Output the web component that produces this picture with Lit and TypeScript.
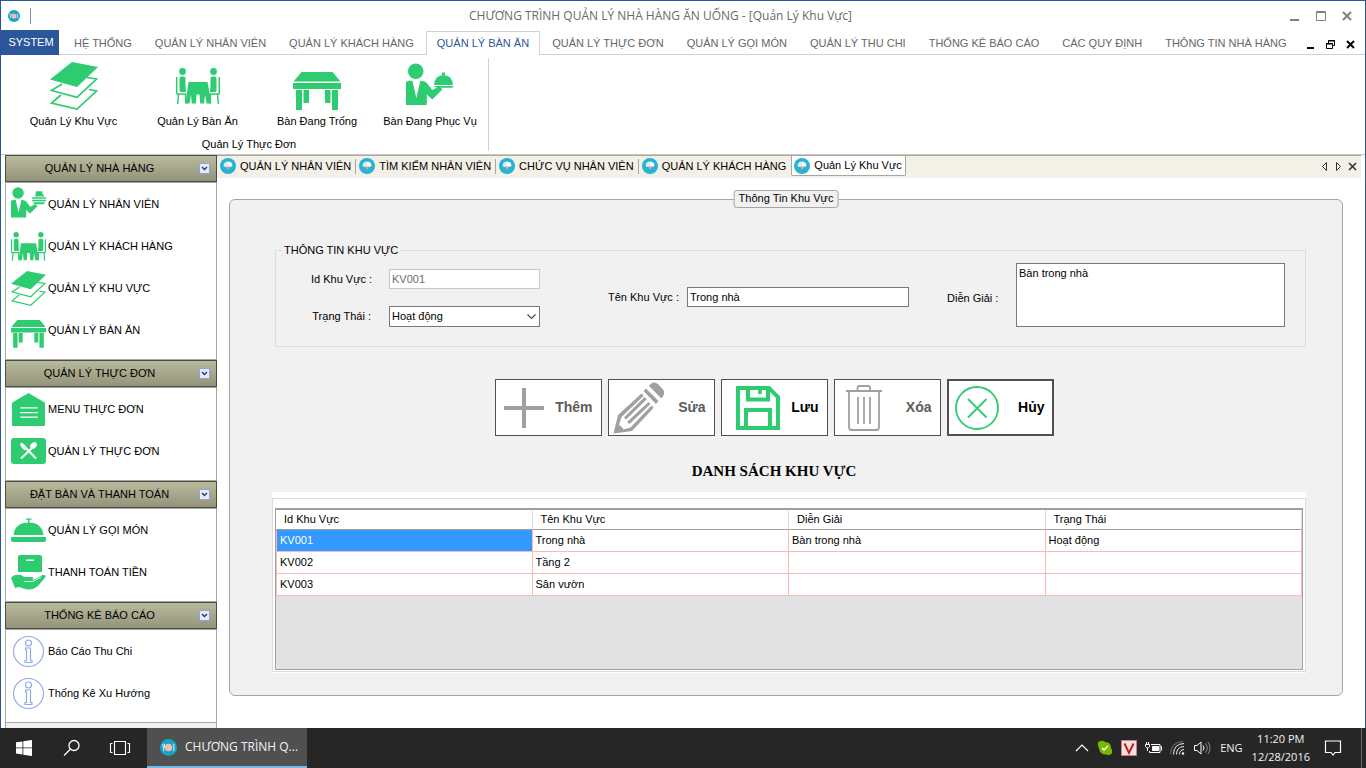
import { LitElement, html, css, svg, nothing } from "lit";
import { customElement } from "lit/decorators.js";
import { classMap } from "lit/directives/class-map.js";

const diner = svg`
  <circle cx="6.500" cy="3.500" r="3.400"/>
  <path d="M3.500 10.500q0-2 2-2h2q2 0 2 2v7.500l.5 6h-5q-1.500 0-1.500-1.500z"/>
  <path d="M.7 9v17M.7 26h10M2.500 26l-.8 10M9.500 26l.4 9.500" fill="none" stroke="currentColor" stroke-width="1.500"/>`;

const waiterBody = svg`
  <circle cx="9.700" cy="8.300" r="7.800"/>
  <path d="M0 19q3-2 6.500-1l3.800 17 4-17q4-.5 6.500 2l5.500 7 6-3q3-.5 4 2.500l-10 10-5.500-5v10.500H0z"/>`;

const layers = html`<svg viewBox="0 0 48 48" fill="currentColor">
  <path d="M0 17.500 22 0 48 5 27 25z"/>
  <path d="M12 22 1.500 28.500 27 35.300 46.500 17 37 15.500M11 33 1.500 41 27 47 46.500 29 39 27.500" fill="none" stroke="currentColor" stroke-width="1.700"/>
</svg>`;
const diners = html`<svg viewBox="0 0 44 36" fill="currentColor">
  ${diner}<g transform="translate(44 0) scale(-1 1)">${diner}</g>
  <path d="M12.500 14h19l4 21.500h-5l-1.500-9-.8 9h-4l-.7-9h-3l-.7 9h-4l-.8-9-1.500 9h-4z"/>
</svg>`;
const table = html`<svg viewBox="0 0 48 38" fill="currentColor">
  <path d="M8.500 0h31L47.500 9.500H.5zM0 11h48v6H0zM3 18h6v20H3zM10.500 18H16v13h-5.500zM32 18h5.500v13H32zM39 18h6v20h-6z"/>
</svg>`;
const waiterDome = html`<svg viewBox="0 0 48 46" fill="currentColor">
  ${waiterBody}
  <path d="M28 22q1-10 9.500-10T47 22zM27 23h21l-2 1.800H31zM36 9.500h3V12h-3z"/>
</svg>`;
const waiterTray = html`<svg viewBox="0 0 48 46" fill="currentColor">
  ${waiterBody}
  <path d="M34 9v-3h9v3l3 4H33zM29 14h19v2H29zM29 17.500h19v2H29zM30 21h17l-2 2.500H32z"/>
</svg>`;
const house = html`<svg viewBox="0 0 34 32" fill="currentColor">
  <path d="M17 0 33 9.500V32H1V9.500z"/>
  <path d="M9 14.500h17M9 19h17M9 23.500h17" stroke="#fff" stroke-width="1.200"/>
</svg>`;
const cutlery = html`<svg viewBox="0 0 35 26" fill="currentColor">
  <rect width="35" height="26" rx="3"/>
  <path d="M10 20.500 21 10M12 7l13 13.500" stroke="#fff" stroke-width="2" fill="none"/>
  <ellipse cx="22.500" cy="7.500" rx="3.800" ry="2.800" transform="rotate(-45 22.500 7.500)" fill="#fff"/>
  <path d="m9 6 2-1.500 5 5-1.500 3q-4-1.500-5.500-6.500z" fill="#fff"/>
</svg>`;
const bell = html`<svg viewBox="0 0 35 25" fill="currentColor">
  <path d="M2.500 17Q4 4.500 17.500 4.500T32.500 17zM0 19h35v3q0 2-2 2H2q-2 0-2-2zM15 .5h5.500v1.300H15zM17 1.500h1.500V5H17z"/>
</svg>`;
const hand = html`<svg viewBox="0 0 35 35" fill="currentColor">
  <path d="M9 0h20q2 0 2 2v15H7V2q0-2 2-2z"/><path d="M15 4.500h8V6h-8z" fill="#fff"/>
  <path d="M0 23q3-4 9-3 3 .5 4 2h8q2.500 1 .5 3h-4 5l9-5q3.500-.5 3 2L27 31q-5 4-11 3.500L8 32l-4 1z"/>
  <path d="M13 26.500h9l8-4.500" stroke="#fff" stroke-width=".8" fill="none"/>
</svg>`;
const info = html`<svg viewBox="0 0 35 35" fill="none" stroke="#8ea7ea" stroke-width="1.100">
  <circle cx="17.500" cy="17.500" r="15"/><circle cx="17.500" cy="9" r="3"/>
  <path d="M14.500 14h5v12.500H21v2h-7v-2h1.500V16h-1z"/>
</svg>`;
const brand = html`<svg viewBox="0 0 16 16">
  <circle cx="8" cy="8" r="8" fill="#12a5c6"/><circle cx="8" cy="8" r="3.500" fill="#f7b8b4"/>
  <path d="M2.800 4.500v3q0 1 .7 1v3M4.200 4.500v3q0 1-.7 1M13 4.500v7" stroke="#fff" stroke-width=".8" fill="none"/>
</svg>`;
const docIcon = html`<svg viewBox="0 0 16 16">
  <circle cx="8" cy="8" r="8" fill="#27b3d4"/>
  <path d="M3.500 8q0-4.500 4.500-4.500T12.500 8L11 9H5z" fill="#d3eef5"/>
  <path d="M8 4q4 0 4 4H8z" fill="#fff"/><path d="M6 8.500h4.500L8 12z" fill="#f09a94"/>
</svg>`;
const plus = html`<svg viewBox="0 0 40 40" class="i40"><path d="M20 0v40M0 20h40" stroke="#a0a0a0" stroke-width="4"/></svg>`;
const pencil = html`<svg viewBox="0 0 52 52" class="i52" fill="#a0a0a0">
  <path d="M36 4q4-6 9-2l5.500 6q2 4-2 8.500z"/><path d="M33 6.500 45.500 19l-2.500 3L30.500 9z"/>
  <path d="M.5 51.500 5 33 28.500 11.500l2.200 2.200L8.500 35l-2.500 8q3 1 4.500 4.500l7-2L38.500 23.500l2.200 2.200L19 49z"/>
  <path d="m12 36.500 20.500-20.500 2.300 2.300L14 38.500zM15 41l21.500-20 2 2L17.500 43z" transform="translate(-1 -1)"/>
</svg>`;
const floppy = html`<svg viewBox="0 0 44 44" class="i44" fill="none" stroke="#2ecc71" stroke-width="4">
  <path d="M2 2h31l9 9v31H2zM12 2v11.500h20V2M10 44V24h24v20"/><path d="M24 2v6" stroke-width="3.500"/>
</svg>`;
const bin = html`<svg viewBox="0 0 36 46" class="bin" fill="none" stroke="#a0a0a0" stroke-width="1.800">
  <path d="M0 6h36M11.500 6V3q0-2 2-2h8.500q2 0 2 2v3M3 6v36q0 3 2.500 3h25q2.500 0 2.500-3V6M12 12v27M18 12v27M24 12v27"/>
</svg>`;
const cancel = html`<svg viewBox="0 0 44 44" class="i44" fill="none" stroke="#2ecc71" stroke-width="1.800">
  <circle cx="22" cy="22" r="21"/><path d="m13 13 18.500 18.500M31.500 13 13 31.500"/>
</svg>`;

const MENUS = ["HỆ THỐNG", "QUẢN LÝ NHÂN VIÊN", "QUẢN LÝ KHÁCH HÀNG", "QUẢN LÝ BÀN ĂN", "QUẢN LÝ THỰC ĐƠN", "QUẢN LÝ GỌI MÓN", "QUẢN LÝ THU CHI", "THỐNG KÊ BÁO CÁO", "CÁC QUY ĐỊNH", "THÔNG TIN NHÀ HÀNG"];
const RIBBON = [
  { label: "Quản Lý Khu Vực", icon: layers, cls: "" },
  { label: "Quản Lý Bàn Ăn", icon: diners, cls: "small" },
  { label: "Bàn Đang Trống", icon: table, cls: "low" },
  { label: "Bàn Đang Phục Vụ", icon: waiterDome, cls: "" },
];
const GROUPS = [
  { title: "QUẢN LÝ NHÀ HÀNG", items: [
    { label: "QUẢN LÝ NHÂN VIÊN", icon: waiterTray },
    { label: "QUẢN LÝ KHÁCH HÀNG", icon: diners },
    { label: "QUẢN LÝ KHU VỰC", icon: layers },
    { label: "QUẢN LÝ BÀN ĂN", icon: table, low: true }] },
  { title: "QUẢN LÝ THỰC ĐƠN", items: [
    { label: "MENU THỰC ĐƠN", icon: house },
    { label: "QUẢN LÝ THỰC ĐƠN", icon: cutlery }] },
  { title: "ĐẶT BÀN VÀ THANH TOÁN", items: [
    { label: "QUẢN LÝ GỌI MÓN", icon: bell },
    { label: "THANH TOÁN TIỀN", icon: hand }] },
  { title: "THỐNG KÊ BÁO CÁO", items: [
    { label: "Báo Cáo Thu Chi", icon: info },
    { label: "Thống Kê Xu Hướng", icon: info }] },
];
const DOCS = ["QUẢN LÝ NHÂN VIÊN", "TÌM KIẾM NHÂN VIÊN", "CHỨC VỤ NHÂN VIÊN", "QUẢN LÝ KHÁCH HÀNG", "Quản Lý Khu Vực"];
const ACTIONS = [
  { label: "Thêm", icon: plus, disabled: true },
  { label: "Sửa", icon: pencil, disabled: true },
  { label: "Lưu", icon: floppy },
  { label: "Xóa", icon: bin, disabled: true },
  { label: "Hủy", icon: cancel, focus: true },
];
const COLUMNS = ["Id Khu Vực", "Tên Khu Vực", "Diễn Giải", "Trạng Thái"];
const ROWS = [
  ["KV001", "Trong nhà", "Bàn trong nhà", "Hoạt động"],
  ["KV002", "Tầng 2", "", ""],
  ["KV003", "Sân vườn", "", ""],
];

const base = css`
  * { box-sizing: border-box; }
  button, input, select, textarea { font: inherit; color: inherit; margin: 0; border-radius: 0; }
  button { border: 0; padding: 0; background: none; }
  svg { display: block; flex: none; overflow: visible; }
`;

@customElement("app-ribbon")
class AppRibbon extends LitElement {
  static styles = [base, css`
    :host { display: block; background: #fff; }
    .title { display: flex; align-items: center; height: 29px; padding: 0 13px 0 7px; color: #6a6a6a; }
    .logo svg { width: 12px; height: 12px; }
    .rule { width: 1px; height: 16px; margin-left: 10px; background: #8a8a8a; }
    .name { flex: 1; text-align: center; font: 12px/16px "Open Sans", sans-serif; }
    .win { display: flex; gap: 16px; }
    .win svg { width: 10px; height: 10px; }
    .tabs { display: flex; height: 25px; box-shadow: inset 0 -1px #d2d2d2; color: #666; }
    .system { width: 58px; background: #2b579a; color: #fff; font-size: 11px; padding: 0 0 1px 2px; margin-right: 4px; }
    .tab { padding: 0 10px; border: 1px solid transparent; border-bottom: 0; margin: 1px 1px 0 0; white-space: nowrap; }
    .tab.on { background: #fff; border-color: #d2d2d2; color: #2b579a; }
    .mdi { display: flex; align-items: center; gap: 11px; margin-left: auto; padding: 4px 10px 0 0; }
    .mdi svg { width: 9px; height: 9px; }
    .panel { display: flex; height: 100px; padding-top: 3px; border-bottom: 1px solid #c8c8c8; }
    .group { display: flex; flex-direction: column; height: 93px; padding: 0 4px 0 9px; border-right: 1px solid #d2d2d2; color: #000; }
    .items { display: grid; grid-template-columns: 127px 121px 118px 108px; }
    .item { display: flex; flex-direction: column; align-items: center; gap: 4px; padding-top: 4px; }
    .pic { display: flex; align-items: center; height: 48px; color: #2ecc71; }
    .pic svg { width: 48px; }
    .pic.small svg { width: 44px; }
    .pic.low { align-items: flex-end; }
    .item, .caption { line-height: 15px; }
    .caption { margin-top: 8px; padding-left: 4px; text-align: center; }
  `];
  render() {
    return html`
      <header class="title">
        <span class="logo">${brand}</span><span class="rule"></span>
        <span class="name">CHƯƠNG TRÌNH QUẢN LÝ NHÀ HÀNG ĂN UỐNG - [Quản Lý Khu Vực]</span>
        <span class="win">
          <button aria-label="Minimize"><svg viewBox="0 0 10 10"><path d="M0 9h9" stroke="#808080" stroke-width="2"/></svg></button>
          <button aria-label="Maximize"><svg viewBox="0 0 10 10"><path d="M.5.5h9v9h-9zM0 1.500h10" fill="none" stroke="#808080"/></svg></button>
          <button aria-label="Close"><svg viewBox="0 0 10 10"><path d="m1 1 8 8M9 1 1 9" stroke="#808080" stroke-width="2"/></svg></button>
        </span>
      </header>
      <nav class="tabs">
        <button class="system">SYSTEM</button>
        ${MENUS.map((m, i) => html`<button class=${classMap({ tab: true, on: i === 3 })}>${m}</button>`)}
        <span class="mdi">
          <button aria-label="Minimize child"><svg viewBox="0 0 9 9"><path d="M1 8h7" stroke="#000" stroke-width="2"/></svg></button>
          <button aria-label="Restore child"><svg viewBox="0 0 9 9"><path d="M2.500 3V.5h6v5H7M0.500 3.500h6v5h-6zM2 1h7M0 4h7" fill="none" stroke="#000"/></svg></button>
          <button aria-label="Close child"><svg viewBox="0 0 9 9"><path d="m1 1 7 7M8 1 1 8" stroke="#000" stroke-width="2"/></svg></button>
        </span>
      </nav>
      <div class="panel">
        <div class="group">
          <div class="items">
            ${RIBBON.map((r) => html`<button class="item"><span class="pic ${r.cls}">${r.icon}</span>${r.label}</button>`)}
          </div>
          <div class="caption">Quản Lý Thực Đơn</div>
        </div>
      </div>`;
  }
}

@customElement("app-sidebar")
class AppSidebar extends LitElement {
  static styles = [base, css`
    :host { display: flex; flex-direction: column; width: 212px; background: #f0f0f0; border: solid #a5a5a5; border-width: 0 1px; }
    .head { display: flex; align-items: center; height: 27px; margin: 0 -1px; padding: 0 6px 0 0; border: 1px solid #4c4c43; background: linear-gradient(#b9b99c, #94947b); }
    .head h2 { flex: 1; margin: 0; padding-right: 6px; font: inherit; text-align: center; }
    .fold { width: 11px; height: 11px; border: 1px solid #93a5c8; background: #e4ebf8; }
    .list { margin: 0; padding: 0 0 8px; list-style: none; background: #fff; border: solid #a5a5a5; border-width: 1px 0; }
    .link { display: flex; align-items: center; gap: 2px; height: 42px; padding-left: 5px; color: #000; text-decoration: none; }
    .pic { display: flex; align-items: center; justify-content: center; width: 35px; height: 35px; color: #2ecc71; }
    .pic svg { width: 35px; max-height: 35px; }
    .pic.low { align-items: flex-end; }
  `];
  render() {
    return GROUPS.map((g) => html`
      <div class="head"><h2>${g.title}</h2>
        <button class="fold" aria-label="Toggle ${g.title}"><svg viewBox="0 0 9 9"><path d="m2 3 2.500 2.500L7 3" fill="none" stroke="#223a7a" stroke-width="1.400"/></svg></button>
      </div>
      <ul class="list">
        ${g.items.map((it: any) => html`<li><a class="link" href="#"><span class=${classMap({ pic: true, low: !!it.low })}>${it.icon}</span>${it.label}</a></li>`)}
      </ul>`);
  }
}

@customElement("area-form")
class AreaForm extends LitElement {
  static styles = [base, css`
    :host { display: flex; flex-direction: column; flex: 1; min-width: 0; background: #fff; }
    .strip { display: flex; height: 23px; margin-right: 4px; background: #f3f0e8; border-top: 1px solid #aca899; }
    .doc { position: relative; display: flex; align-items: center; gap: 4px; height: 20px; padding: 0 5px 0 3px; white-space: nowrap; }
    .doc svg { width: 16px; height: 16px; }
    .doc::after { content: ""; position: absolute; right: 0; top: 3px; bottom: 2px; width: 1px; background: #aca899; }
    .doc.last::after { display: none; }
    .doc.on { background: #fff; border: 1px solid #aca899; border-top: 0; border-radius: 0 0 2px 2px; padding: 0 3px 0 2px; }
    .doc.on::after { display: none; }
    .tools { display: flex; align-items: center; gap: 5px; margin-left: auto; padding: 0 4px 2px 0; }
    .tools svg { width: 9px; height: 9px; }
    .panel { position: relative; flex: 1; display: flex; flex-direction: column; margin: 21px 18px 32px 12px; padding: 44px 36px 22px 42px; background: #f1f1f1; border: 1px solid #a5a5a5; border-radius: 6px; margin-right: 22px; }
    .tag { position: absolute; top: -10px; left: 50%; transform: translateX(-50%); margin: 0; padding: 0 4px; height: 18px; font: inherit; line-height: 15px; white-space: nowrap; background: #f1f1f1; border: 1px solid #a5a5a5; border-radius: 3px; }
    .info { display: flex; gap: 38px; margin: 0 0 0 3px; padding: 6px 20px 19px 35px; border: 1px solid #dcdcdc; }
    .info legend { margin-left: -29px; padding: 0 2px; line-height: 13px; }
    label { white-space: nowrap; }
    .pair { display: grid; grid-template-columns: 78px 1fr; row-gap: 17px; align-content: start; align-items: center; flex: 229 1 0; margin-right: 30px; padding-top: 6px; }
    .pair label { text-align: right; padding-right: 18px; }
    .field { display: grid; grid-template-columns: 79px 1fr; align-items: center; align-content: start; flex: 301 1 0; padding-top: 24px; }
    .notes { display: grid; grid-template-columns: 69px 1fr; align-items: center; flex: 338 1 0; }
    .notes label { padding-top: 6px; }
    input, select, textarea { display: block; width: 100%; background: #fff; border: 1px solid #7a7a7a; border-radius: 0; outline: 0; }
    input { height: 20px; padding: 0 2px; }
    input:disabled { color: #6d6d6d; border-color: #c6c6c6; }
    .drop { position: relative; }
    .drop svg { position: absolute; right: 4px; top: 8px; width: 9px; height: 6px; pointer-events: none; }
    select { appearance: none; height: 21px; padding: 0 2px; }
    textarea { height: 64px; padding: 3px 2px; resize: none; line-height: 13px; }
    .lower { padding-right: 30px; }
    .actions { display: flex; justify-content: center; gap: 6px; margin-top: 32px; }
    .act { display: flex; align-items: center; justify-content: space-between; width: 107px; height: 57px; padding: 0 8px; background: #fff; border: 1px solid #505050; font-size: 14px; font-weight: 700; color: #000; }
    .act:disabled { color: #5c5c5c; }
    .act.focus { border-width: 2px; padding: 0 7px 0 6px; }
    .i40 { width: 40px; height: 40px; }
    .i44 { width: 44px; height: 44px; }
    .act:not(.focus) .i44 { margin-left: 6px; }
    .i52 { width: 52px; height: 52px; margin-left: -4px; }
    .bin { width: 36px; height: 46px; margin-left: 3px; }
    .caption { margin: 26px 0 0; font: 700 15px/18px "Liberation Serif", serif; text-align: center; color: #000; }
    .group { flex: 1; display: flex; margin-top: 12px; padding: 6px 0 1px; background: #fff; }
    .frame { flex: 1; display: flex; padding: 9px 2px 1px; border: 1px solid #dcdcdc; }
    .grid { flex: 1; background: #e2e2e2; border: 1px solid #a0a0a0; border-top-width: 2px; }
    table { width: 100%; table-layout: fixed; border-collapse: separate; border-spacing: 0; background: #fff; }
    th { height: 20px; padding: 0 8px; font-weight: 400; text-align: left; border-right: 1px solid #dcdcdc; border-bottom: 1px solid #a0a0a0; }
    td { height: 22px; padding: 0 3px; border-right: 1px solid #ffb8b8; border-bottom: 1px solid #ffb8b8; }
    td:first-child { border-left: 1px solid #ffb8b8; }
    .sel { background: #3399ff; color: #fff; }
  `];
  render() {
    return html`
      <nav class="strip">
        ${DOCS.map((d, i) => html`<button class=${classMap({ doc: true, on: i === 4, last: i === 3 })}>${docIcon}${d}</button>`)}
        <span class="tools">
          <button aria-label="Previous"><svg viewBox="0 0 9 9"><path d="M6.500.5v8l-4-4z" fill="none" stroke="#333"/></svg></button>
          <button aria-label="Next"><svg viewBox="0 0 9 9"><path d="M2.500.5v8l4-4z" fill="none" stroke="#333"/></svg></button>
          <button aria-label="Close tab"><svg viewBox="0 0 9 9"><path d="m1 1 7 7M8 1 1 8" stroke="#333" stroke-width="1.600"/></svg></button>
        </span>
      </nav>
      <section class="panel">
        <h1 class="tag">Thông Tin Khu Vực</h1>
        <fieldset class="info">
          <legend>THÔNG TIN KHU VỰC</legend>
          <div class="pair">
            <label for="id">Id Khu Vực :</label><input id="id" value="KV001" disabled>
            <label for="state">Trạng Thái :</label>
            <span class="drop"><select id="state"><option>Hoạt động</option></select>
              <svg viewBox="0 0 9 6"><path d="m.5.5 4 4 4-4" fill="none" stroke="#444" stroke-width="1.100"/></svg></span>
          </div>
          <div class="field"><label for="name">Tên Khu Vực :</label><input id="name" value="Trong nhà"></div>
          <div class="notes"><label for="notes">Diễn Giải :</label><textarea id="notes" .value=${"Bàn trong nhà"}></textarea></div>
        </fieldset>
        <div class="lower">
          <div class="actions">
            ${ACTIONS.map((a) => html`<button class=${classMap({ act: true, focus: !!a.focus })} ?disabled=${!!a.disabled}>${a.icon}${a.label}</button>`)}
          </div>
          <h2 class="caption">DANH SÁCH KHU VỰC</h2>
        </div>
        <div class="group"><div class="frame"><div class="grid">
          <table>
            <thead><tr>${COLUMNS.map((c) => html`<th>${c}</th>`)}</tr></thead>
            <tbody>${ROWS.map((r, y) => html`<tr>${r.map((c, x) => html`<td class=${x + y === 0 ? "sel" : nothing}>${c}</td>`)}</tr>`)}</tbody>
          </table>
        </div></div></div>
      </section>`;
  }
}

@customElement("app-taskbar")
class AppTaskbar extends LitElement {
  static styles = [base, css`
    :host { display: flex; align-items: center; height: 40px; background: #262626; color: #f2f2f2; font: 12px/18px "Open Sans", sans-serif; }
    .start { display: flex; gap: 30px; padding: 0 17px 0 16px; }
    .task { display: flex; align-items: center; gap: 8px; width: 160px; height: 40px; padding: 0 8px 0 13px; background: #505050; border-bottom: 2px solid #76b9ed; white-space: nowrap; }
    .task svg { width: 17px; height: 17px; }
    .tray { display: flex; align-items: center; gap: 8px; margin-left: auto; height: 40px; padding-right: 20px; font-size: 11px; border-right: 1px solid #6a6a6a; margin-right: 4px; }
    .clock { padding-right: 7px; text-align: center; }
    .lang { padding: 0 1px; }
  `];
  render() {
    return html`
      <div class="start">
        <button aria-label="Start"><svg width="16" height="16" viewBox="0 0 16 16" fill="#fff"><path d="M0 2.300 6.500 1.400v6.100H0zM7.300 1.300 16 0v7.500H7.300zM0 8.300h6.500v6.200L0 13.600zM7.300 8.300H16V16l-8.700-1.300z"/></svg></button>
        <button aria-label="Search"><svg width="18" height="16" viewBox="0 0 18 16" fill="none" stroke="#fff" stroke-width="1.300"><circle cx="12" cy="5.500" r="5"/><path d="M8.500 9 2 15.500"/></svg></button>
        <button aria-label="Task view"><svg width="20" height="14" viewBox="0 0 20 14" fill="none" stroke="#fff" stroke-width="1.100"><path d="M4.500.5h11v13h-11zM2.500 2.500H.5v9h2M17.500 2.500h2v9h-2"/></svg></button>
      </div>
      <button class="task">${brand}CHƯƠNG TRÌNH Q...</button>
      <div class="tray">
        <svg width="14" height="8" viewBox="0 0 14 8"><path d="m1 7 6-6 6 6" fill="none" stroke="#fff" stroke-width="1.200"/></svg>
        <svg width="16" height="16" viewBox="0 0 16 16"><path d="M1 5q-1-4 3-4 2-1 4 1 6 0 6 6 2 2 1 5-2 3-5 1.500-7 .5-8-6Z" fill="#7ab800"/><path d="m5 8 2 2 4-4" fill="none" stroke="#fff" stroke-width="1.400"/></svg>
        <svg width="16" height="16" viewBox="0 0 16 16"><path d="M.5.5h15v15H.5z" fill="#f6e2e2" stroke="#d08080"/><path d="M3.500 3.500 8 13l4.500-9.500" fill="none" stroke="#c81e1e" stroke-width="2"/></svg>
        <svg width="17" height="14" viewBox="0 0 17 14" fill="none" stroke="#fff"><path d="M6 3.500h9v8H4.500V10M15.500 5.500h1v4"/><path d="M7.500 5.500h6v4h-6z" fill="#fff"/><path d="M0.500 3.500h4v2q-.5 1.500-2 1.500t-2-1.500zM1.500 3V1M3.500 3V1M2.500 7v3"/></svg>
        <svg width="16" height="14" viewBox="0 0 16 14" fill="none" stroke="#aaa"><path d="M3.500 13.500q0-10.500 10.500-11M6.500 13.500q0-7.500 7.500-8M9.500 13.500q0-4.500 4.500-5" stroke="#eee"/><circle cx="13" cy="12.500" r="1.200" fill="#fff" stroke="none"/><path d="M.5 13Q1 1 13 .5" opacity=".6"/></svg>
        <svg width="17" height="14" viewBox="0 0 17 14" fill="none" stroke="#fff"><path d="M.5 4.500h2.500l4-3.500v12l-4-3.500H.5z"/><path d="M9 4.500q2 2.500 0 5"/><path d="M11.500 2.500q3.500 4.500 0 9M14 1q4 6 0 12" stroke="#888"/></svg>
        <span class="lang">ENG</span>
        <time class="clock">11:20 PM<br>12/28/2016</time>
        <svg width="16" height="17" viewBox="0 0 16 17" fill="none" stroke="#fff" stroke-width="1.200"><path d="M.5 1h15v11.500H10L8 15l-2-2.500H.5z"/></svg>
      </div>`;
  }
}

@customElement("app-root")
class AppRoot extends LitElement {
  static styles = [base, css`
    :host { display: flex; flex-direction: column; min-height: 100vh; background: #fff; font: 11px/15px "Liberation Sans", Arial, sans-serif; color: #000; }
    .window { flex: 1; display: flex; flex-direction: column; border: 1px solid #2b579a; border-bottom: 0; }
    .main { flex: 1; display: flex; padding-left: 4px; }
  `];
  render() {
    return html`
      <div class="window">
        <app-ribbon></app-ribbon>
        <div class="main"><app-sidebar></app-sidebar><area-form></area-form></div>
      </div>
      <app-taskbar></app-taskbar>`;
  }
}
